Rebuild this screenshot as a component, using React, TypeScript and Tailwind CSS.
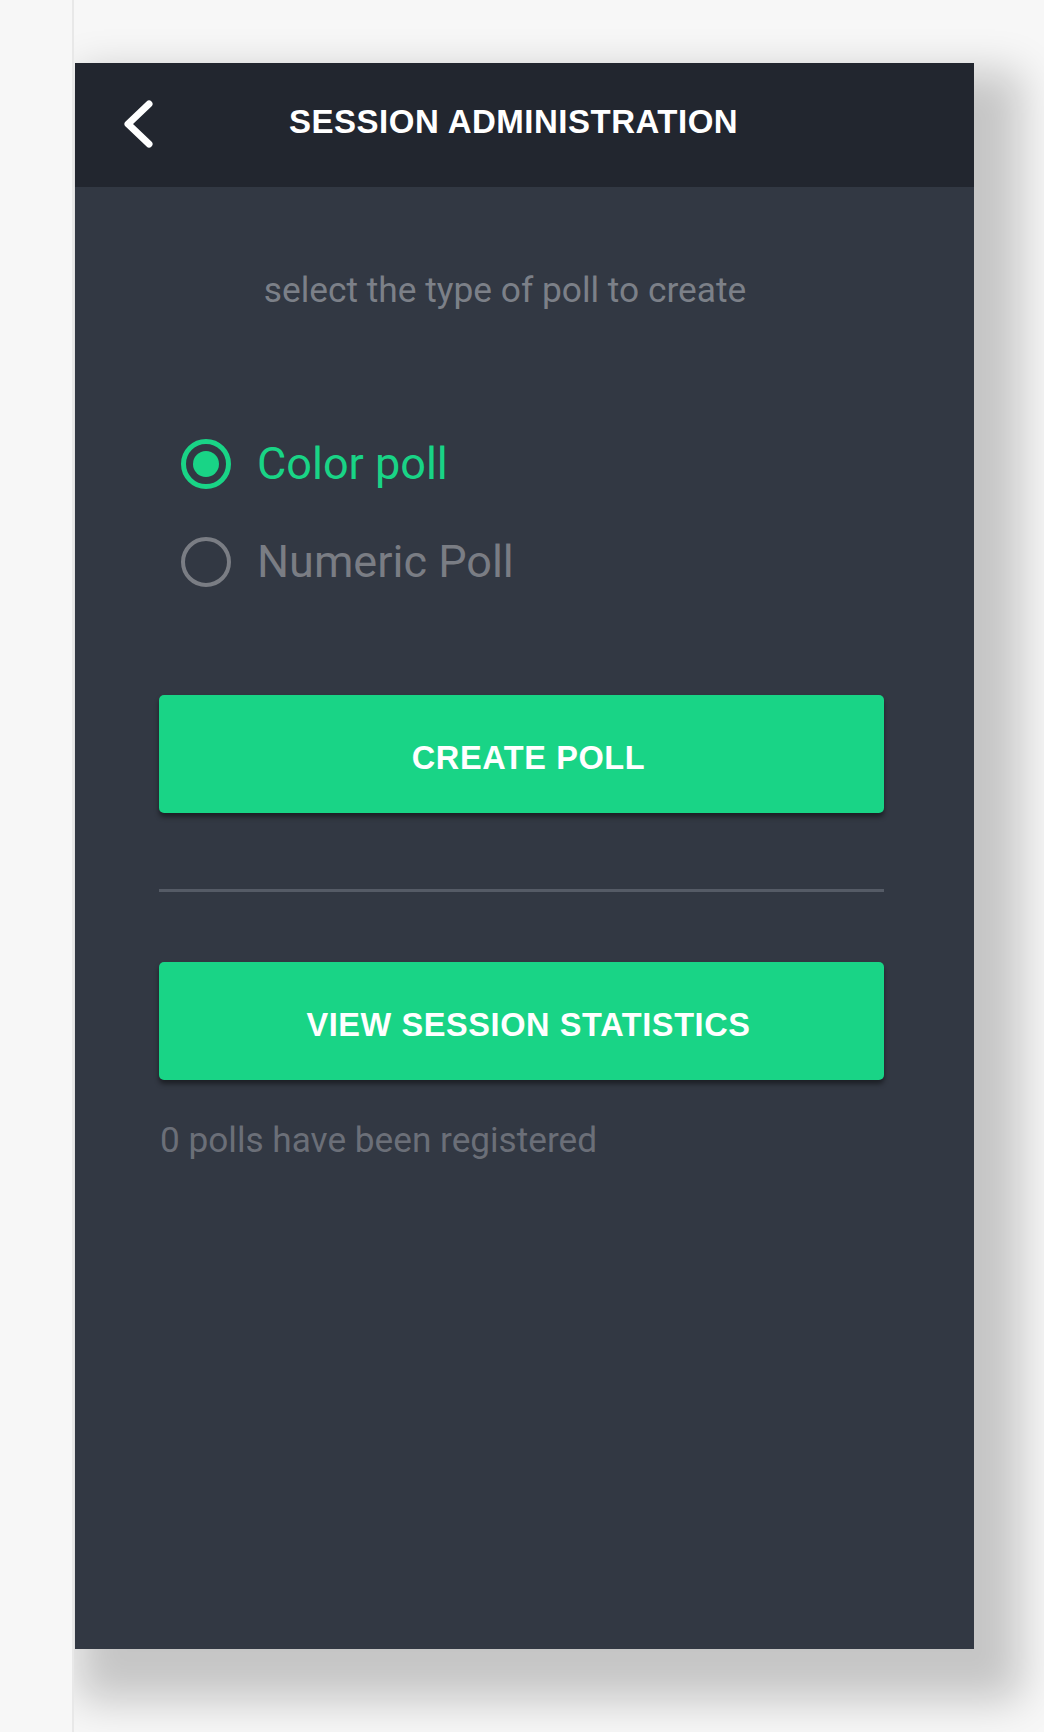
import { useState } from 'react';

type PollType = 'color' | 'numeric';

const OPTIONS: { id: PollType; label: string }[] = [
  { id: 'color', label: 'Color poll' },
  { id: 'numeric', label: 'Numeric Poll' },
];

function BackChevron() {
  return (
    <svg width="32" height="50" viewBox="0 0 32 50" fill="none" className="shrink-0">
      <path d="M26 4 L5 24 L26 44" stroke="#ffffff" strokeWidth="7" strokeLinecap="round" strokeLinejoin="round" />
    </svg>
  );
}

function Radio({ checked }: { checked: boolean }) {
  if (checked) {
    return (
      <span className="flex h-[50px] w-[50px] shrink-0 items-center justify-center rounded-full border-[5px] border-[#19d486]">
        <span className="h-[26px] w-[26px] rounded-full bg-[#19d486]" />
      </span>
    );
  }
  return <span className="h-[50px] w-[50px] shrink-0 rounded-full border-[4px] border-[#7a7d84]" />;
}

function ActionButton({ label }: { label: string }) {
  return (
    <button className="flex h-[118px] w-full items-center justify-center rounded-[5px] bg-[#19d486] pl-[14px] pt-[8px] font-['Liberation_Sans',Arial,sans-serif] text-[32.5px] font-bold leading-[33px] tracking-[0.6px] text-white shadow-[0_4px_5px_rgba(0,0,0,0.45)]">
      {label}
    </button>
  );
}

export default function App() {
  const [type, setType] = useState<PollType>('color');

  return (
    <div className="min-h-[1732px] bg-[#f7f7f7] pl-[72px]">
      <div className="h-[1732px] overflow-hidden border-l-2 border-[#e8e8e8] pl-px pt-[63px]">
        <div className="flex h-[1586px] w-[899px] flex-col bg-[#323843] shadow-[25px_30px_40px_22px_rgba(0,0,0,0.2)]">
          {/* header */}
          <div className="flex h-[124px] shrink-0 items-start bg-[#22262f] pl-[48px]">
            <div className="mt-[37px]">
              <BackChevron />
            </div>
            <h1 className="ml-[134px] mt-[42px] font-['Liberation_Sans',Arial,sans-serif] text-[33px] font-bold leading-[33px] tracking-[0.5px] text-white">
              SESSION ADMINISTRATION
            </h1>
          </div>

          {/* body */}
          <div className="flex flex-col pl-[84px] pr-[90px] pt-[86px] font-['Roboto',sans-serif]">
            <p className="pr-[33px] text-center text-[35.3px] leading-[35px] text-[#7c8088]">
              select the type of poll to create
            </p>

            <div className="ml-[22px] mt-[131px] flex flex-col gap-[48px]">
              {OPTIONS.map((o) => {
                const on = type === o.id;
                return (
                  <label
                    key={o.id}
                    onClick={() => setType(o.id)}
                    className="flex h-[50px] cursor-pointer items-center gap-[26px]"
                  >
                    <Radio checked={on} />
                    <span className={`text-[45px] leading-[50px] ${on ? 'text-[#19d486]' : 'text-[#7a7d84]'}`}>
                      {o.label}
                    </span>
                  </label>
                );
              })}
            </div>

            <div className="mt-[108px]">
              <ActionButton label="CREATE POLL" />
            </div>

            <div className="mt-[76px] h-[3px] bg-[#555b66]" />

            <div className="mt-[70px]">
              <ActionButton label="VIEW SESSION STATISTICS" />
            </div>

            <p className="mt-[43px] pl-px text-[35.2px] leading-[35px] text-[#6b6f78]">0 polls have been registered</p>
          </div>
        </div>
      </div>
    </div>
  );
}
